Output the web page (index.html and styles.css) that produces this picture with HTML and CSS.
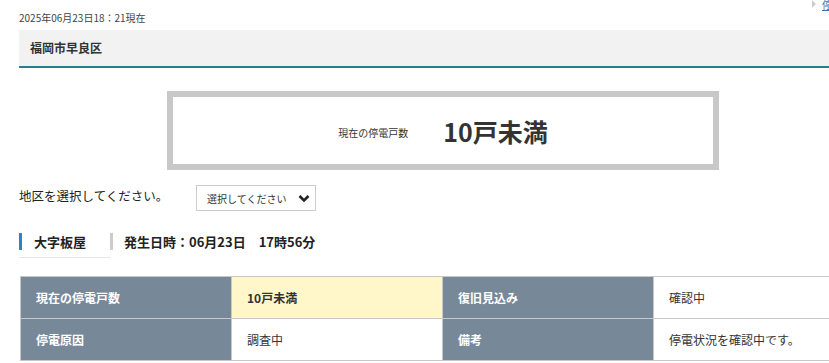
FILE: index.html
```html
<!DOCTYPE html>
<html lang="ja">
<head>
<meta charset="utf-8">
<link rel="stylesheet" href="styles.css">
</head>
<body>
<div class="page">
  <div class="topline">
    <span class="stamp">2025年06月23日18：21現在</span>
    <a class="toplink" href="#"><span class="tri"></span><span class="lk">停電情報</span></a>
  </div>
  <div class="area-head">福岡市早良区</div>

  <div class="summary-wrap">
    <div class="summary">
      <span class="sum-label">現在の停電戸数</span>
      <span class="sum-value">10戸未満</span>
    </div>
  </div>

  <div class="select-row">
    <span class="select-label">地区を選択してください。</span>
    <div class="select-box">
      <span>選択してください</span>
      <svg class="chev" width="12" height="9" viewBox="0 0 12 9"><path d="M1.5 2 L6 6.5 L10.5 2" fill="none" stroke="#222" stroke-width="2.6"/></svg>
    </div>
  </div>

  <div class="district-row">
    <div class="district">大字板屋</div>
    <div class="sep"></div>
    <div class="occur">発生日時：06月23日　17時56分</div>
  </div>

  <table class="info">
    <tr>
      <th>現在の停電戸数</th>
      <td class="hl">10戸未満</td>
      <th>復旧見込み</th>
      <td>確認中</td>
    </tr>
    <tr>
      <th>停電原因</th>
      <td>調査中</td>
      <th>備考</th>
      <td>停電状況を確認中です。</td>
    </tr>
  </table>
</div>
</body>
</html>
```
FILE: styles.css
```css
html, body {
  margin: 0;
  padding: 0;
  overflow: hidden;
  background: #fff;
}
body {
  font-family: "Noto Sans CJK JP", "Noto Sans", sans-serif;
  color: #333;
}
.page {
  width: 846px;
  margin-left: 19px;
}
.topline {
  display: flex;
  justify-content: space-between;
  align-items: flex-start;
  height: 30px;
}
.stamp {
  font-size: 10px;
  color: #444;
  padding-top: 11px;
  line-height: 14px;
}
.toplink {
  display: flex;
  align-items: flex-start;
  gap: 6px;
  margin-right: 3px;
  text-decoration: none;
  line-height: 10px;
  font-size: 10px;
}
.tri {
  width: 0;
  height: 0;
  border-left: 4px solid #ccc;
  border-top: 4px solid transparent;
  border-bottom: 4px solid transparent;
}
.lk {
  color: #3a6ea8;
  text-decoration: underline;
}
.area-head {
  background: #f2f2f2;
  border-bottom: 2px solid #2d7c8c;
  height: 36px;
  line-height: 36px;
  padding-left: 11px;
  font-size: 12px;
  font-weight: bold;
  color: #333;
}
.summary-wrap {
  display: flex;
  padding-top: 23px;
  padding-left: 148px;
}
.summary {
  width: 540px;
  height: 67px;
  border: 6px solid #c8c8c8;
  display: flex;
  justify-content: center;
  align-items: center;
  gap: 35px;
  box-sizing: content-box;
}
.sum-label {
  font-size: 10px;
  color: #333;
  margin-top: 4px;
}
.sum-value {
  font-size: 25px;
  font-weight: bold;
  color: #333;
}
.select-row {
  display: flex;
  align-items: center;
  margin-top: 15px;
  height: 26px;
}
.select-label {
  font-size: 12.5px;
  width: 177px;
  margin-top: -6px;
  color: #222;
}
.select-box {
  border: 1px solid #ccc;
  display: flex;
  align-items: center;
  justify-content: space-between;
  padding: 0 5px 0 10px;
  box-sizing: border-box;
  width: 120px;
  height: 26px;
  font-size: 10px;
  color: #333;
}
.chev { margin-top: 1px; }
.district-row {
  display: flex;
  align-items: center;
  margin-top: 18px;
  height: 24px;
}
.district {
  border-left: 3px solid #2a86c2;
  padding-left: 12px;
  width: 74px;
  font-size: 13px;
  font-weight: bold;
  line-height: 17px;
  color: #222;
  position: relative;
}
.district::after {
  content: "";
  position: absolute;
  left: -3px;
  right: -2px;
  bottom: -8px;
  border-bottom: 1px solid #e6e6e6;
}
.sep {
  width: 3px;
  height: 17px;
  background: #ccc;
  margin-left: 2px;
  margin-right: 11px;
}
.occur {
  font-size: 13px;
  font-weight: bold;
  color: #222;
}
.info {
  margin-top: 23px;
  margin-left: 1px;
  border-collapse: collapse;
  width: 845px;
  table-layout: fixed;
}
.info th, .info td {
  border: 1px solid #c8c8c8;
  height: 41px;
  padding: 0 0 0 15px;
  text-align: left;
  font-size: 12px;
}
.info th {
  background: #778899;
  color: #fff;
  font-weight: bold;
}
.info td {
  color: #333;
  background: #fff;
}
.info td.hl {
  background: #fff7c9;
  font-weight: bold;
}
```
